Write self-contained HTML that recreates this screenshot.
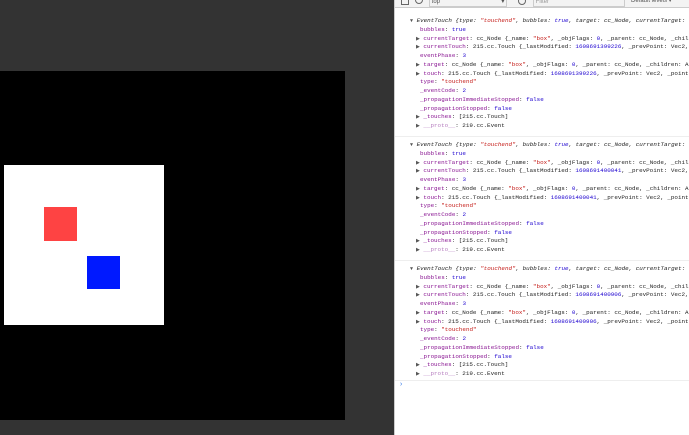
<html><head><style>
body{margin:0;width:689px;height:435px;overflow:hidden;background:#333;position:relative;font-family:"Liberation Mono",monospace}
.a{position:absolute}
.dt{position:absolute;left:394px;top:0;width:295px;height:435px;background:#fff;border-left:1px solid #ccc;overflow:hidden}
.ln{position:absolute;font-size:5.9px;white-space:pre;color:#222;line-height:8px}
.k{color:#881391}.s{color:#c41a16}.n{color:#1c00cf}.g{color:#888}.t{font-style:italic}
.tri{color:#555;font-size:5px}
</style></head><body>
<div class="a" style="left:0;top:71px;width:345px;height:349px;background:#000"></div>
<div class="a" style="left:4px;top:165px;width:160px;height:160px;background:#fff"></div>
<div class="a" style="left:44px;top:207px;width:33px;height:34px;background:#fe4343"></div>
<div class="a" style="left:87px;top:256px;width:33px;height:33px;background:#0019ff"></div>
<div class="dt">
<div class="a" style="left:0;top:0;width:295px;height:7px;background:#f3f3f3;border-bottom:1px solid #ccc"></div>
<div class="a" style="left:6px;top:-3px;width:6px;height:6px;border:1px solid #666"></div>
<div class="a" style="left:20px;top:-4px;width:6px;height:6px;border:1px solid #666;border-radius:50%"></div>
<div class="a" style="left:34px;top:-2px;width:76px;height:7px;border:1px solid #ccc;font-size:6px;line-height:6px;color:#555;font-family:'Liberation Sans'">&nbsp;top<span style="float:right">▾&nbsp;</span></div>
<div class="a" style="left:123px;top:-3px;width:6px;height:6px;border:1px solid #666;border-radius:50%"></div>
<div class="a" style="left:138px;top:-2px;width:90px;height:7px;border:1px solid #ccc;font-size:6px;line-height:6px;color:#999;font-family:'Liberation Sans'">&nbsp;Filter</div>
<div class="a" style="left:236px;top:-2px;font-size:6px;line-height:6px;color:#555;font-family:'Liberation Sans'">Default levels ▾</div>
<div id="c"></div>
<div class="a" style="left:0;top:380px;width:295px;border-top:1px solid #eee"></div>
<div class="ln" style="left:4px;top:381px;color:#3a7ce8;font-size:7px">›</div>
</div>
<script>
var ts=["1608691399226","1608691400041","1608691400906"];var h="";
for(var b=0;b<3;b++){var y=17+b*124;
var L=[
[15,'<span class="tri">▼</span> <span class="t">EventTouch {type: <span class="s">"touchend"</span>, bubbles: <span class="n">true</span>, target: cc_Node, currentTarget: cc_Node, …}</span>'],
[25,'<span class="k">bubbles</span>: <span class="n">true</span>'],
[21,'<span class="tri">▶</span> <span class="k">currentTarget</span>: cc_Node {_name: <span class="s">"box"</span>, _objFlags: <span class="n">0</span>, _parent: cc_Node, _children: Array(0), …}'],
[21,'<span class="tri">▶</span> <span class="k">currentTouch</span>: 215.cc.Touch {_lastModified: <span class="n">'+ts[b]+'</span>, _prevPoint: Vec2, _point: Vec2, …}'],
[25,'<span class="k">eventPhase</span>: <span class="n">3</span>'],
[21,'<span class="tri">▶</span> <span class="k">target</span>: cc_Node {_name: <span class="s">"box"</span>, _objFlags: <span class="n">0</span>, _parent: cc_Node, _children: Array(0), …}'],
[21,'<span class="tri">▶</span> <span class="k">touch</span>: 215.cc.Touch {_lastModified: <span class="n">'+ts[b]+'</span>, _prevPoint: Vec2, _point: Vec2, …}'],
[25,'<span class="k">type</span>: <span class="s">"touchend"</span>'],
[25,'<span class="k">_eventCode</span>: <span class="n">2</span>'],
[25,'<span class="k">_propagationImmediateStopped</span>: <span class="n">false</span>'],
[25,'<span class="k">_propagationStopped</span>: <span class="n">false</span>'],
[21,'<span class="tri">▶</span> <span class="k">_touches</span>: [215.cc.Touch]'],
[21,'<span class="tri">▶</span> <span class="k" style="color:#b77fc0">__proto__</span>: 219.cc.Event']];
for(var i=0;i<L.length;i++)h+='<div class="ln" style="left:'+L[i][0]+'px;top:'+(y+i*8.75)+'px">'+L[i][1]+'</div>';
if(b<2)h+='<div class="a" style="left:0;top:'+(y+119)+'px;width:295px;border-top:1px solid #eee"></div>';}
document.getElementById("c").innerHTML=h;
</script>
</body></html>
